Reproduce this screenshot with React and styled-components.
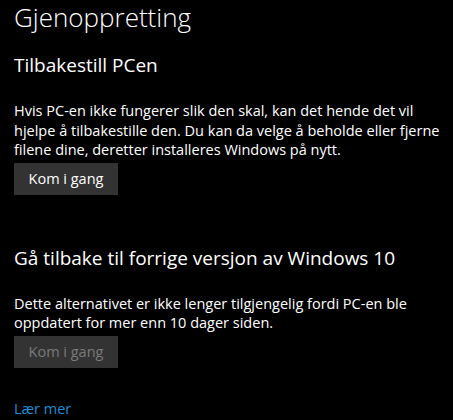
import styled, { createGlobalStyle } from "styled-components";

const GlobalStyle = createGlobalStyle`
  html, body {
    margin: 0;
    padding: 0;
    background: #000;
  }
  body {
    font-family: "Open Sans", "Noto Sans", sans-serif;
    color: #fff;
  }
`;

const Page = styled.div`
  display: flex;
  flex-direction: column;
  padding: 0 0 0 14px;
  width: 453px;
  height: 420px;
  box-sizing: border-box;
  overflow: hidden;
`;

const Title = styled.h1`
  margin: 0;
  font-size: 26px;
  font-weight: 300;
  line-height: 34px;
`;

const Section = styled.section`
  display: flex;
  flex-direction: column;
  align-items: flex-start;
  margin-top: ${(p) => p.$top}px;
`;

const Heading = styled.h2`
  margin: 0;
  font-size: 19px;
  font-weight: 400;
  line-height: 26px;
`;

const Text = styled.p`
  margin: 23px 0 0;
  font-size: 14.5px;
  line-height: 19.5px;
  color: #fff;
`;

const Button = styled.button`
  margin-top: 3px;
  width: 104px;
  height: 32px;
  border: 0;
  padding: 0;
  background: #333;
  color: ${(p) => (p.disabled ? "#7a7a7a" : "#fff")};
  font-family: inherit;
  font-size: 14.5px;
`;

const Link = styled.a`
  margin-top: 31px;
  font-size: 14.5px;
  color: #1a8fd6;
  text-decoration: none;
`;

export default function App() {
  return (
    <Page>
      <GlobalStyle />
      <Title>Gjenoppretting</Title>
      <Section $top={18}>
        <Heading>Tilbakestill PCen</Heading>
        <Text>
          Hvis PC-en ikke fungerer slik den skal, kan det hende det vil hjelpe å
          tilbakestille den. Du kan da velge å beholde eller fjerne filene dine,
          deretter installeres Windows på nytt.
        </Text>
        <Button>Kom i gang</Button>
      </Section>
      <Section $top={50}>
        <Heading>Gå tilbake til forrige versjon av Windows 10</Heading>
        <Text>
          Dette alternativet er ikke lenger tilgjengelig fordi PC-en ble
          oppdatert for mer enn 10 dager siden.
        </Text>
        <Button disabled>Kom i gang</Button>
      </Section>
      <Link href="#">Lær mer</Link>
    </Page>
  );
}
